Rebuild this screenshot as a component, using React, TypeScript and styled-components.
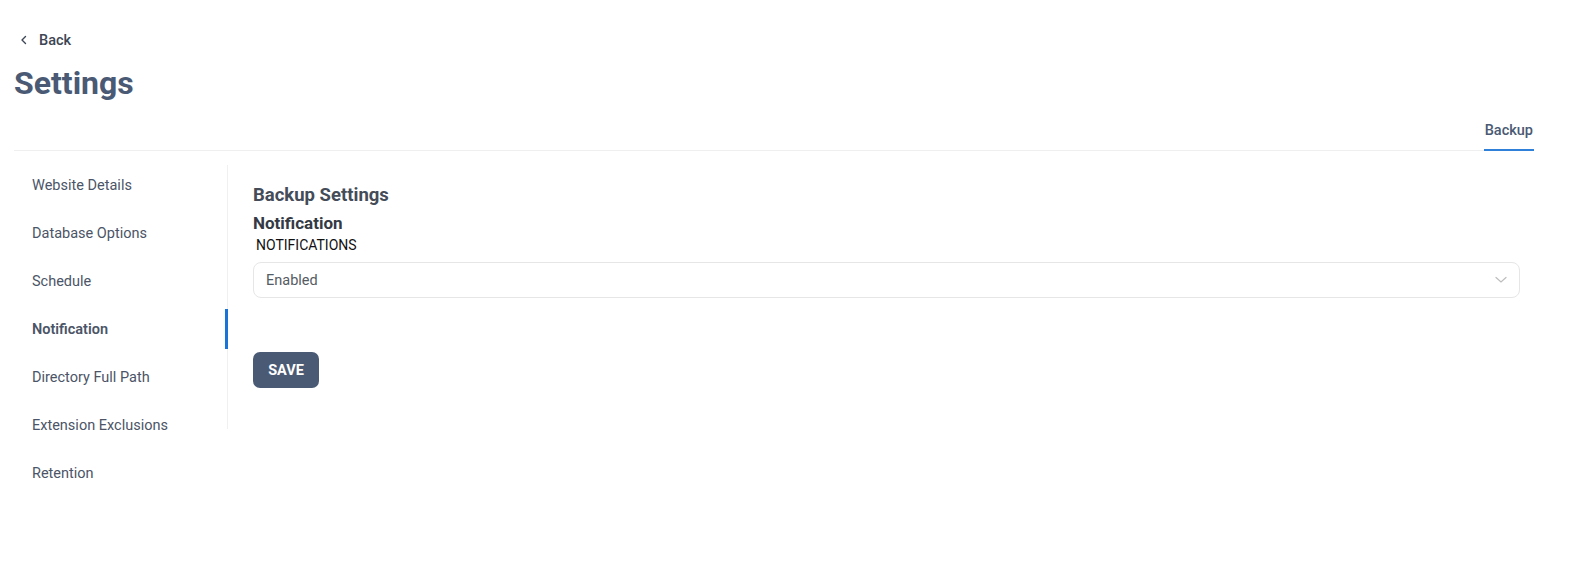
import * as React from "react";
import styled, { createGlobalStyle } from "styled-components";

const GlobalStyle = createGlobalStyle`
  * { box-sizing: border-box; }
  body {
    margin: 0;
    background: #fff;
    font-family: Roboto, "Liberation Sans", sans-serif;
    color: #4b5567;
  }
`;

const Page = styled.div`
  padding: 29px 37px 0 14px;
`;

const BackLink = styled.a`
  display: inline-flex;
  align-items: center;
  gap: 11px;
  padding-left: 6px;
  font-size: 14.5px;
  font-weight: 500;
  color: #3d4654;
  text-decoration: none;
  cursor: pointer;
  height: 22px;
`;

const Title = styled.h1`
  margin: 12px 0 0;
  font-size: 32px;
  font-weight: 700;
  color: #4a5a74;
  line-height: 40px;
`;

const TabBar = styled.div`
  margin-top: 19px;
  display: flex;
  justify-content: flex-end;
  border-bottom: 1px solid #efefef;
`;

const Tab = styled.div<{ $active?: boolean }>`
  padding: 0 1px 10px;
  font-size: 14.5px;
  font-weight: 500;
  color: #4a5a74;
  border-bottom: 2px solid ${(p) => (p.$active ? "#2f80d9" : "transparent")};
  margin-bottom: -1px;
`;

const Body = styled.div`
  display: flex;
  align-items: flex-start;
  padding-top: 10px;
`;

const Side = styled.ul`
  position: relative;
  list-style: none;
  margin: 0;
  padding: 0;
  width: 214px;
  flex-shrink: 0;
  &::before {
    content: "";
    position: absolute;
    right: 0;
    top: 4px;
    width: 1px;
    height: 264px;
    background: #f0f0f0;
  }
`;

const SideItem = styled.li<{ $active?: boolean }>`
  position: relative;
  height: 48px;
  display: flex;
  align-items: center;
  padding-left: 18px;
  font-size: 14.5px;
  font-weight: ${(p) => (p.$active ? 600 : 400)};
  color: #4b5567;
  white-space: nowrap;
  &::after {
    content: "";
    display: ${(p) => (p.$active ? "block" : "none")};
    position: absolute;
    right: 0;
    top: 4px;
    width: 3px;
    height: 40px;
    background: #1a73d6;
  }
`;

const Content = styled.section`
  flex: 1;
  padding: 23px 14px 0 25px;
`;

const SectionTitle = styled.h2`
  margin: 0;
  font-size: 18.5px;
  font-weight: 700;
  color: #444c58;
  line-height: 22px;
`;

const GroupTitle = styled.h3`
  margin: 7px 0 0;
  font-size: 17px;
  font-weight: 700;
  color: #333a44;
  line-height: 20px;
`;

const FieldLabel = styled.label`
  display: block;
  margin: 4px 0 0 3px;
  font-family: Roboto, "Liberation Sans", sans-serif;
  font-size: 14px;
  color: #111;
  line-height: 16px;
`;

const SelectBox = styled.div`
  margin-top: 9px;
  height: 36px;
  border: 1px solid #e6e6e6;
  border-radius: 8px;
  display: flex;
  align-items: center;
  justify-content: space-between;
  padding: 0 12px;
  font-size: 14.5px;
  color: #555b63;
`;

const SaveButton = styled.button`
  margin-top: 54px;
  height: 36px;
  width: 66px;
  border: none;
  border-radius: 7px;
  background: #4a5a74;
  color: #fff;
  font-family: Roboto, "Liberation Sans", sans-serif;
  font-size: 14.5px;
  font-weight: 700;
  cursor: pointer;
`;

const items = [
  "Website Details",
  "Database Options",
  "Schedule",
  "Notification",
  "Directory Full Path",
  "Extension Exclusions",
  "Retention",
];

export default function App() {
  return (
    <Page>
      <GlobalStyle />
      <BackLink>
        <svg width="8" height="10" viewBox="0 0 8 10" fill="none">
          <path d="M5.5 1.5 2 5l3.5 3.5" stroke="#3d4654" strokeWidth="1.4" strokeLinecap="round" strokeLinejoin="round" />
        </svg>
        Back
      </BackLink>
      <Title>Settings</Title>
      <TabBar>
        <Tab $active>Backup</Tab>
      </TabBar>
      <Body>
        <Side>
          {items.map((it) => (
            <SideItem key={it} $active={it === "Notification"}>
              {it}
            </SideItem>
          ))}
        </Side>
        <Content>
          <SectionTitle>Backup Settings</SectionTitle>
          <GroupTitle>Notification</GroupTitle>
          <FieldLabel>NOTIFICATIONS</FieldLabel>
          <SelectBox>
            <span>Enabled</span>
            <svg width="12" height="8" viewBox="0 0 12 8" fill="none">
              <path d="M1 1.5 6 6l5-4.5" stroke="#bdbdbd" strokeWidth="1.2" strokeLinecap="round" />
            </svg>
          </SelectBox>
          <SaveButton>SAVE</SaveButton>
        </Content>
      </Body>
    </Page>
  );
}
